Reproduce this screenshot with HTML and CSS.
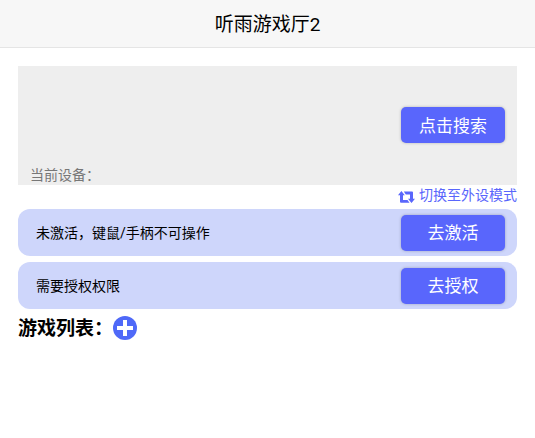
FILE: index.html
```html
<!DOCTYPE html>
<html lang="zh-CN">
<head>
    <meta charset="UTF-8">
    <meta name="viewport" content="width=device-width, initial-scale=1.0">
    <title>听雨游戏厅2</title>
    <link rel="stylesheet" href="styles.css">
</head>
<body>

    <header class="navbar">听雨游戏厅2</header>

    <main class="content">
        <section class="device-panel">
            <button type="button" class="action-button">点击搜索</button>
            <div class="device-name">当前设备：</div>
        </section>

        <div class="mode-row">
            <a href="#" class="mode-link">
                <svg class="switch-icon" viewBox="0 0 17 12" aria-hidden="true">
                    <path d="M0 4.3 L3.4 0 L6.8 4.3 H5 V9 H9.5 L11.5 11.7 H3 Q2 11.7 2 10.7 V4.3 Z"/>
                    <path d="M5.8 0.5 H14 Q15 0.5 15 1.5 V7.8 H17 L13.5 12 L10 7.8 H12 V3.4 H7.8 Z"/>
                </svg>
                切换至外设模式
            </a>
        </div>

        <div class="status-list">
            <div class="status-row">
                <span>未激活，键鼠/手柄不可操作</span>
                <button type="button" class="action-button">去激活</button>
            </div>
            <div class="status-row">
                <span>需要授权权限</span>
                <button type="button" class="action-button">去授权</button>
            </div>
        </div>

        <div class="games-header">
            <h2>游戏列表：</h2>
            <button type="button" class="add-button" aria-label="添加游戏">
                <svg viewBox="0 0 24 24" aria-hidden="true">
                    <circle cx="12" cy="12" r="12"/>
                    <path d="M12 4 V20 M4 12 H20"/>
                </svg>
            </button>
        </div>
    </main>

</body>
</html>
```

FILE: styles.css
```css
* {
    box-sizing: border-box;
}

body {
    font-family: Roboto, "Noto Sans CJK SC", sans-serif;
    font-size: 14px;
    line-height: 20px;
    background-color: #fff;
    color: #000;
    margin: 0;
}

.navbar {
    background-color: #f7f7f7;
    border-bottom: 1px solid #e5e5e5;
    padding-top: 2px;
    font-size: 19px;
    line-height: 45px;
    text-align: center;
}

.content {
    padding: 18px;
}

.device-panel {
    display: flex;
    flex-direction: column;
    align-items: flex-end;
    gap: 22px;
    background-color: #eee;
    padding: 41px 12px 0;
}

.device-name {
    align-self: flex-start;
    color: #777;
}

.action-button {
    width: 104px;
    height: 36px;
    padding: 0 0 2px;
    background-color: #5966fc;
    color: #fff;
    border: none;
    border-radius: 5px;
    box-shadow: 0 0 3px rgba(0, 0, 0, 0.25);
    font-family: inherit;
    font-size: 17px;
    cursor: pointer;
}

.mode-row {
    display: flex;
    justify-content: flex-end;
    padding-bottom: 4px;
}

.mode-link {
    display: flex;
    align-items: center;
    gap: 4px;
    color: #5966fc;
    text-decoration: none;
}

.switch-icon {
    width: 17px;
    height: 12px;
    margin-top: 3px;
    fill: currentColor;
}

.status-list {
    display: flex;
    flex-direction: column;
    gap: 6px;
}

.status-row {
    display: flex;
    justify-content: space-between;
    align-items: center;
    height: 47px;
    padding: 0 12px 0 18px;
    background-color: #ced6fb;
    border-radius: 12px;
}

.games-header {
    display: flex;
    align-items: center;
    padding-top: 7px;
}

.games-header h2 {
    margin: 0;
    padding-top: 2px;
    font-size: 19px;
    line-height: 22px;
}

.add-button {
    width: 24px;
    height: 24px;
    padding: 0;
    background: none;
    border: none;
    cursor: pointer;
}

.add-button svg {
    display: block;
}

.add-button circle {
    fill: #4f69f8;
}

.add-button path {
    stroke: #fff;
    stroke-width: 4;
}
```
